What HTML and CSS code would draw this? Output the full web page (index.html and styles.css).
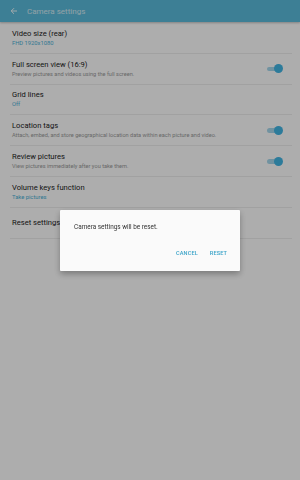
FILE: index.html
```html
<!DOCTYPE html>
<html lang="en">
<head>
    <meta charset="UTF-8">
    <meta name="viewport" content="width=device-width, initial-scale=1.0">
    <title>Camera settings</title>
    <link rel="stylesheet" href="styles.css">
</head>
<body>
    <div class="screen">
        <header class="appbar">
            <svg class="back" width="8" height="8" viewBox="0 0 8 8">
                <path d="M7 4H1.3M4 1.2L1.2 4L4 6.8" fill="none" stroke="#fff" stroke-width="0.9"/>
            </svg>
            <span class="appbar-title">Camera settings</span>
        </header>

        <ul class="settings">
            <li class="row">
                <div class="row-text">
                    <p class="row-title">Video size (rear)</p>
                    <p class="row-value">FHD 1920x1080</p>
                </div>
            </li>
            <li class="row">
                <div class="row-text">
                    <p class="row-title">Full screen view (16:9)</p>
                    <p class="row-desc">Preview pictures and videos using the full screen.</p>
                </div>
                <span class="switch"></span>
            </li>
            <li class="row">
                <div class="row-text">
                    <p class="row-title">Grid lines</p>
                    <p class="row-value">Off</p>
                </div>
            </li>
            <li class="row">
                <div class="row-text">
                    <p class="row-title">Location tags</p>
                    <p class="row-desc">Attach, embed, and store geographical location data within each picture and video.</p>
                </div>
                <span class="switch"></span>
            </li>
            <li class="row">
                <div class="row-text">
                    <p class="row-title">Review pictures</p>
                    <p class="row-desc">View pictures immediately after you take them.</p>
                </div>
                <span class="switch"></span>
            </li>
            <li class="row">
                <div class="row-text">
                    <p class="row-title">Volume keys function</p>
                    <p class="row-value">Take pictures</p>
                </div>
            </li>
            <li class="row">
                <div class="row-text">
                    <p class="row-title">Reset settings</p>
                </div>
            </li>
        </ul>
    </div>

    <div class="scrim">
        <div class="dialog">
            <p class="dialog-msg">Camera settings will be reset.</p>
            <div class="dialog-actions">
                <button class="dialog-btn">CANCEL</button>
                <button class="dialog-btn">RESET</button>
            </div>
        </div>
    </div>
</body>
</html>
```

FILE: styles.css
```css
* { box-sizing: border-box; }

body { margin: 0; font-family: Roboto, "Noto Sans", sans-serif; background: #fff; }

.screen { width: 300px; height: 480px; background: #fff; }

.appbar {
    height: 22px;
    background: #5abcdc;
    display: flex;
    align-items: center;
    padding-left: 10px;
    box-shadow: 0 1px 2px rgba(0,0,0,0.25);
}
.appbar .back { margin-right: 9px; }
.appbar-title { color: #fff; font-size: 8px; opacity: 0.75; }

.settings { list-style: none; margin: 1px 0 0; padding: 0 8px 0 10px; }
.row {
    height: 30.8px;
    display: flex;
    align-items: center;
    justify-content: space-between;
    border-bottom: 1px solid #eee;
    padding: 0 2px;
}
.row-text p { margin: 0; }
.row-title { font-size: 7.6px; color: #222; line-height: 10px; }
.row-value { font-size: 5.8px; color: #4ab2d8; line-height: 8px; }
.row-desc { font-size: 5.6px; color: #9a9a9a; line-height: 8px; }

.switch { position: relative; width: 16px; height: 10px; margin-right: 7px; }
.switch::before {
    content: "";
    position: absolute;
    left: 0; top: 3px;
    width: 12px; height: 4.5px;
    border-radius: 3px;
    background: #a6d8ec;
}
.switch::after {
    content: "";
    position: absolute;
    right: 0; top: 0.5px;
    width: 9px; height: 9px;
    border-radius: 50%;
    background: #42b5e4;
}

.scrim {
    position: fixed;
    inset: 0;
    background: rgba(0,0,0,0.32);
    display: flex;
    align-items: center;
    justify-content: center;
}
.dialog {
    width: 180px;
    height: 61px;
    background: #fafafa;
    border-radius: 1px;
    box-shadow: 0 3px 6px rgba(0,0,0,0.3);
    padding: 13px 13px 0 14px;
    display: flex;
    flex-direction: column;
}
.dialog-msg { margin: 0; font-size: 6.4px; color: #333; }
.dialog-actions { margin-top: auto; margin-bottom: 15px; display: flex; justify-content: flex-end; gap: 12px; }
.dialog-btn {
    border: 0; background: none; padding: 0;
    font-family: inherit; font-size: 5.6px; font-weight: 500;
    color: #3aa3c8; letter-spacing: 0.1px;
}
```
